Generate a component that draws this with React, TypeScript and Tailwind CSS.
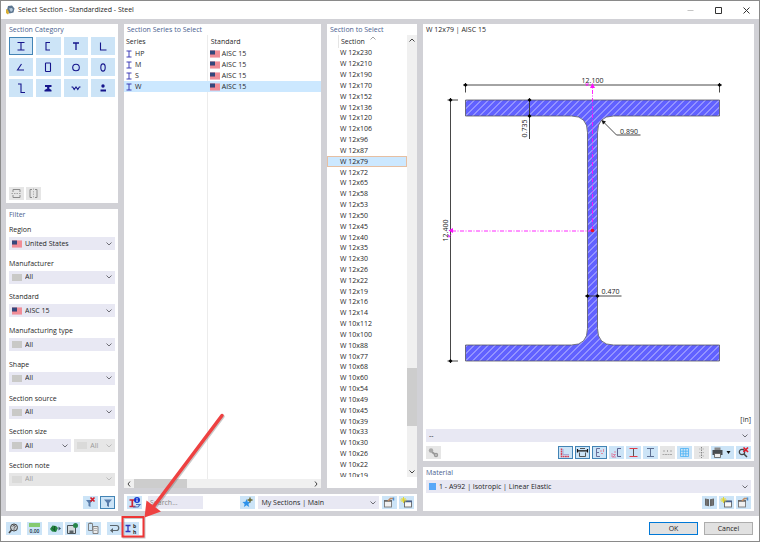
import { useState } from "react";
import type { ReactNode } from "react";
import clsx from "clsx";

const sections = [
  ...[230, 210, 190, 170, 152, 136, 120, 106, 96, 87, 79, 72, 65, 58, 53, 50, 45, 40, 35, 30, 26, 22, 19, 16, 14].map(
    (weight) => `W 12x${weight}`
  ),
  ...[112, 100, 88, 77, 68, 60, 54, 49, 45, 39, 33, 30, 26, 22, 19].map((weight) => `W 10x${weight}`),
];

const Svg = ({ children, className, box = "0 0 15 13" }: { children: ReactNode; className?: string; box?: string }) => (
  <svg viewBox={box} className={clsx("shrink-0", className)} fill="none" aria-hidden="true">
    {children}
  </svg>
);

const Flag = () => (
  <Svg box="0 0 10 8" className="h-2 w-2.5">
    <rect y="0.5" width="10" height="7" fill="#ee7f8b" />
    <path d="M5 2h5M5 4h5M0 6h10" stroke="#f6a9b0" strokeWidth="0.7" />
    <rect y="0.5" width="5" height="4" fill="#34477c" />
  </Svg>
);

const Blank = ({ faded }: { faded?: boolean }) => (
  <span className={clsx("h-[7px] w-2.5 shrink-0", faded ? "bg-[#dadad9]" : "bg-[#c9c9c7]")} />
);

const Chevron = ({ faded }: { faded?: boolean }) => (
  <Svg box="0 0 6 4" className="pointer-events-none -ml-2 h-1 w-1.5">
    <path d="M0.5 0.5 3 3 5.5 0.5" stroke={faded ? "#b4b4b4" : "#606068"} strokeWidth="0.9" />
  </Svg>
);

type DropDownProps = {
  id?: string;
  value: string;
  icon?: ReactNode;
  disabled?: boolean;
  label?: string;
  className?: string;
};

const DropDown = ({ id, value, icon, disabled, label, className }: DropDownProps) => (
  <span
    className={clsx(
      "flex h-[13px] min-w-0 items-center gap-[3px] pr-[3px] pl-[3px]",
      disabled ? "bg-[#e6e6e6] text-[#9a9a9a]" : "bg-[#e8e8f3]",
      className
    )}
  >
    {icon}
    <select id={id} aria-label={label} disabled={disabled} className="min-w-0 flex-1 appearance-none bg-transparent">
      <option>{value}</option>
    </select>
    <Chevron faded={disabled} />
  </span>
);

type IconButtonProps = { label: string; children: ReactNode; active?: boolean; disabled?: boolean; className?: string };

const IconButton = ({ label, children, active, disabled, className }: IconButtonProps) => (
  <button
    aria-label={label}
    disabled={disabled}
    className={clsx(
      "flex h-[13px] items-center justify-center",
      className ?? "w-[15px]",
      disabled ? "bg-[#e6e6e6]" : "bg-[#cce4f7]",
      active && "outline outline-1 -outline-offset-1 outline-[#4384b5]"
    )}
  >
    {children}
  </button>
);

const PanelTitle = ({ children }: { children: ReactNode }) => (
  <h2 className="px-[3px] font-medium text-[#4a5f90]">{children}</h2>
);

const navy = "#15158c";

const categories = [
  { name: "I-sections", shape: <path d="M8.500 5.500h7M8.500 13h7M12 5.500v7.500" /> },
  { name: "Channels", shape: <path d="M14 5.500h-4v7.500h4" /> },
  { name: "T-sections", shape: <path d="M9 6h6M12 6v7" strokeWidth="1.300" /> },
  { name: "Angles", shape: <path d="M9.500 5.500v7.500h6" /> },
  { name: "Rolled angles", shape: <path d="m12.500 6-4 6h6.500" /> },
  { name: "Rectangular hollow sections", shape: <rect x="9.500" y="5" width="5" height="8.500" rx="0.600" /> },
  { name: "Circular hollow sections", shape: <circle cx="12" cy="9.500" r="3.300" /> },
  { name: "Elliptical hollow sections", shape: <ellipse cx="12" cy="9.500" rx="2.200" ry="3.600" /> },
  { name: "Z-sections", shape: <path d="M9 5h3v8.500h4" /> },
  {
    name: "Rails",
    shape: (
      <path d="M9 6h6.500v2h-2l-.3 1.500 2.300 1.500v1.500H8.500v-1.500l2.800-1.500-.3-1.500H9z" fill={navy} stroke="none" />
    ),
  },
  { name: "Corrugated sheets", shape: <path d="m7.500 8 1.200 0 1.500 2.500L12 8l1.800 2.500L15.300 8h1.200" /> },
  {
    name: "Round bars",
    shape: (
      <>
        <circle cx="12" cy="7" r="1.700" fill={navy} stroke="none" />
        <rect x="9.500" y="10.500" width="5.500" height="2" fill={navy} stroke="none" />
      </>
    ),
  },
];

const filters = [
  { id: "region", label: "Region", value: "United States", flag: true },
  { id: "manufacturer", label: "Manufacturer", value: "All" },
  { id: "standard", label: "Standard", value: "AISC 15", flag: true },
  { id: "manufacturing-type", label: "Manufacturing type", value: "All" },
  { id: "shape", label: "Shape", value: "All" },
  { id: "section-source", label: "Section source", value: "All" },
  { id: "section-size", label: "Section size", value: "All", split: true },
  { id: "section-note", label: "Section note", value: "All", disabled: true },
];

function CategoryPanel() {
  const [selected, setSelected] = useState("I-sections");

  return (
    <section className="flex h-[179px] flex-col bg-white pt-px">
      <PanelTitle>Section Category</PanelTitle>
      <div className="mt-0.5 grid grid-cols-4 gap-[3px] px-[3px]">
        {categories.map(({ name, shape }) => (
          <button
            key={name}
            aria-label={name}
            onClick={() => setSelected(name)}
            className={clsx(
              "flex h-[18px] justify-center bg-[#cce4f7]",
              selected === name && "outline outline-1 -outline-offset-1 outline-[#4384b5]"
            )}
          >
            <svg viewBox="0 0 24 18" className="h-[18px] w-6" fill="none" stroke={navy} strokeWidth="1.1">
              {shape}
            </svg>
          </button>
        ))}
      </div>
      <div className="mt-auto flex gap-0.5 px-[3px] pb-[3px]">
        <IconButton label="Horizontal split" disabled>
          <Svg className="h-[13px] w-[15px]">
            <path d="M4 5V2.500h7V5M4 8v2.500h7V8" stroke="#8c8c8c" />
            <path d="M2.500 6.500h10" stroke="#a5a5a5" strokeDasharray="1.500 1" />
          </Svg>
        </IconButton>
        <IconButton label="Vertical split" disabled>
          <Svg className="h-[13px] w-[15px]">
            <path d="M6 2.500H4v8h2M9 2.500h2v8H9" stroke="#8c8c8c" />
            <path d="M7.500 1.500v10" stroke="#b5b5b5" strokeDasharray="1.500 1" />
          </Svg>
        </IconButton>
      </div>
    </section>
  );
}

function FilterPanel() {
  return (
    <section className="flex min-h-0 flex-1 flex-col bg-white pt-px">
      <PanelTitle>Filter</PanelTitle>
      <div className="mt-[5px] flex flex-1 flex-col justify-between px-[3px]">
        {filters.map(({ id, label, value, flag, split, disabled }) => (
          <div key={id} className="flex flex-col gap-0.5">
            <label htmlFor={id}>{label}</label>
            <div className="flex gap-[3px]">
              <DropDown
                id={id}
                value={value}
                disabled={disabled}
                icon={flag ? <Flag /> : <Blank faded={disabled} />}
                className="flex-[63]"
              />
              {split && (
                <DropDown label="Maximum size" value={value} disabled icon={<Blank faded />} className="flex-[39]" />
              )}
            </div>
          </div>
        ))}
      </div>
      <div className="mt-2.5 flex justify-end gap-0.5 px-[3px] pb-0.5">
        <IconButton label="Clear filter">
          <Svg className="h-[13px] w-[15px]">
            <path d="M3 4h7L7.500 7v4L5.500 10V7z" fill="#587cab" />
            <path d="m7.500 1.500 4 4m0-4-4 4" stroke="#d61c28" strokeWidth="1.700" />
          </Svg>
        </IconButton>
        <IconButton label="Filter" active>
          <Svg className="h-[13px] w-[15px]">
            <path d="M4 3.500h8L9 7v4L7 10V7z" fill="#587cab" />
          </Svg>
        </IconButton>
      </div>
    </section>
  );
}

function SeriesPanel() {
  const [selected, setSelected] = useState("W");

  return (
    <section className="flex min-h-0 flex-col bg-white pt-px">
      <PanelTitle>Section Series to Select</PanelTitle>
      <div className="flex-1 bg-[linear-gradient(#ececec,#ececec)] bg-[length:1px_100%] bg-[position:42.500%_0] bg-no-repeat">
        <table className="w-full table-fixed border-collapse text-left">
          <thead>
            <tr className="h-[13px]">
              <th className="w-[43%] p-0 pl-0.5 font-normal">Series</th>
              <th className="p-0 pl-0.5 font-normal">Standard</th>
            </tr>
          </thead>
          <tbody>
            {["HP", "M", "S", "W"].map((name) => (
              <tr
                key={name}
                onClick={() => setSelected(name)}
                className={clsx("h-[11px]", selected === name && "bg-[#cce8ff]")}
              >
                <td className="p-0 pl-0.5">
                  <span className="flex items-center gap-[3px]">
                    <Svg box="0 0 6 8" className="h-2 w-1.5">
                      <path d="M0.500 1h5M0.500 7h5M3 1v6" stroke="#2b2bb0" strokeWidth="0.9" />
                    </Svg>
                    {name}
                  </span>
                </td>
                <td className="p-0 pl-px">
                  <span className="flex items-center gap-0.5">
                    <Flag />
                    AISC 15
                  </span>
                </td>
              </tr>
            ))}
          </tbody>
        </table>
      </div>
      <div className="flex h-[9px] items-center justify-between bg-[#f0f0f0] px-[3px]">
        <Svg box="0 0 4 6" className="h-1.5 w-1">
          <path d="M3 0.500 1 3l2 2.500" stroke="#444" />
        </Svg>
        <span className="mr-auto ml-[3px] h-[9px] w-[28%] bg-[#cdcdcd]" />
        <Svg box="0 0 4 6" className="h-1.5 w-1">
          <path d="m1 0.500 2 2.500-2 2.500" stroke="#444" />
        </Svg>
      </div>
    </section>
  );
}

function SectionList() {
  const [selected, setSelected] = useState("W 12x79");

  return (
    <section className="flex min-h-0 flex-col bg-white pt-px pb-[11px]">
      <PanelTitle>Section to Select</PanelTitle>
      <div className="flex min-h-0 flex-1">
        <div className="flex min-w-0 flex-1 flex-col">
          <div className="ml-[11px] flex h-[13px] items-center border-l border-[#e5e5e5] pl-0.5">
            <span className="flex-1">Section</span>
            <Svg box="0 0 6 4" className="mr-[31px] -mt-2 h-1 w-1.5">
              <path d="M0.500 3.500 3 1l2.500 2.500" stroke="#8a8a8a" strokeWidth="0.800" />
            </Svg>
          </div>
          <div className="min-h-0 flex-1 overflow-hidden">
            <ul className="flex h-[101%] flex-col">
              {sections.map((name) => (
                <li key={name} className="flex min-h-0 flex-1">
                  <button
                    onClick={() => setSelected(name)}
                    className={clsx(
                      "flex flex-1 items-center border pl-3 text-left",
                      selected === name ? "border-[#e6bfa2] bg-[#cce8ff]" : "border-transparent"
                    )}
                  >
                    {name}
                  </button>
                </li>
              ))}
            </ul>
          </div>
        </div>
        <div className="flex w-2.5 flex-col items-center bg-[#f0f0f0] py-[3px]">
          <Svg box="0 0 6 4" className="h-1 w-1.5">
            <path d="M0.500 3.500 3 1l2.500 2.500" stroke="#444" />
          </Svg>
          <span className="flex-[325]" />
          <span className="w-full flex-[58] bg-[#cdcdcd]" />
          <span className="flex-[44]" />
          <Svg box="0 0 6 4" className="h-1 w-1.5">
            <path d="M0.500 0.500 3 3l2.500-2.500" stroke="#444" />
          </Svg>
        </div>
      </div>
    </section>
  );
}

const WindowNew = () => (
  <Svg className="h-[13px] w-[15px]">
    <rect x="5.500" y="5" width="7" height="6" fill="#f8f8f8" stroke="#666" strokeWidth="0.900" />
    <path d="M5 5.500h8" stroke="#49618c" strokeWidth="1.500" />
    <path d="M4.500 1v6M1.500 4h6M2.500 2l4 4m0-4-4 4" stroke="#e6d51c" strokeWidth="0.900" />
  </Svg>
);

const WindowEdit = () => (
  <Svg className="h-[13px] w-[15px]">
    <rect x="2.500" y="4.500" width="7" height="6.500" fill="#f0f0f0" stroke="#777" strokeWidth="0.900" />
    <path d="M2 5h8" stroke="#666" strokeWidth="1.500" />
    <path d="m6 5 2.500-2.500H11" stroke="#c18d63" strokeWidth="1.700" />
    <path d="M11.500 1.500v3" stroke="#4f8fd0" strokeWidth="1.500" />
  </Svg>
);

function LibraryBar() {
  return (
    <div className="flex h-[17px] items-center bg-white px-[3px]">
      <IconButton label="Section info">
        <Svg className="h-[13px] w-[15px]">
          <path d="M2.500 4h5M2.500 10.500h6M5.300 4v6" stroke="#cf2535" strokeWidth="1.700" />
          <path d="M6 11h5l2-2.500H9" stroke="#4a6fc0" strokeWidth="1.200" />
          <circle cx="10" cy="4" r="3" fill="#1437d0" />
          <path d="M10 2v.8M10 3.400V6" stroke="#fff" />
        </Svg>
      </IconButton>
      <input
        aria-label="Search sections"
        placeholder="Search..."
        className="ml-1.5 h-[13px] w-[55px] bg-[#e8e8f3] px-0.5 placeholder:text-[#888]"
      />
      <IconButton label="Add to favorites" className="ml-auto w-[15px]">
        <Svg className="h-[13px] w-[15px]">
          <path d="m6.500 3 1.200 2.700 2.900.2-2.200 2 .8 3-2.700-1.600L3.900 11l.7-3.100-2.200-2 3-.2z" fill="#2d92ea" />
          <path d="M10 1.500v5M7.500 4h5" stroke="#68662c" strokeWidth="1.400" />
        </Svg>
      </IconButton>
      <DropDown label="Section library" value="My Sections | Main" className="mr-[3px] ml-[3px] w-[42%]" />
      <div className="flex gap-0.5">
        <IconButton label="Edit library">
          <WindowEdit />
        </IconButton>
        <IconButton label="New library">
          <WindowNew />
        </IconButton>
      </div>
    </div>
  );
}

const outline =
  "M465.500 99.500H719.500V115.500H613.500Q597.500 115.500 597.500 132V328Q597.500 344.500 613.500 344.500H719.500V360.500H465.500V344.500H571.500Q587.500 344.500 587.500 328V132Q587.500 115.500 571.500 115.500H465.500Z";

const Tick = ({ x, y }: { x: number; y: number }) => (
  <path d={`M${x - 2} ${y}L${x} ${y - 2}L${x + 2} ${y}L${x} ${y + 2}Z`} fill="#000" stroke="none" />
);

function SectionDrawing() {
  return (
    <svg
      viewBox="423 35 331 379"
      className="min-h-0 w-full flex-1 text-[7px]"
      role="img"
      aria-label="Cross-section W 12x79"
    >
      <defs>
        <pattern id="hatch" width="7" height="7" patternUnits="userSpaceOnUse">
          <rect width="7" height="7" fill="#6161ff" />
          <path d="M-1.500 1.500l3-3M0 7L7 0M5.500 8.500l3-3" stroke="#d0d0ff" strokeWidth="0.900" />
        </pattern>
      </defs>
      <path d={outline} fill="url(#hatch)" stroke="#55555f" strokeWidth="0.800" />
      <g stroke="#333" strokeWidth="0.900" fill="none">
        <path d="M465.500 92v-9.500M719.500 82.500V92M463 84.500h259" />
        <path d="M458 99.500h-10.500M450.500 97.500v265M447.500 360.500h10.500" />
        <path d="M529.500 98v40.500" />
        <path d="M585 295.500h36.500" />
        <path d="m602.500 120.500 14 14h24" />
      </g>
      <Tick x={465.5} y={84.5} />
      <Tick x={719.5} y={84.5} />
      <Tick x={450.5} y={99.5} />
      <Tick x={450.5} y={360.5} />
      <Tick x={529.5} y={99.5} />
      <Tick x={529.5} y={115.5} />
      <Tick x={587.5} y={295.5} />
      <Tick x={597.5} y={295.5} />
      <path d="m601.500 119.500 4.500 1.500-3 3z" fill="#111" />
      <g stroke="#ff10ff" strokeWidth="0.900" fill="none">
        <path d="M592.500 229.500V86" strokeDasharray="4 1.500 1 1.500" />
        <path d="M592 230.500H452" strokeDasharray="4 1.500 1 1.500" />
        <path d="m585.500 83 3 2m0-2.500-2.500 3M448 234l2 3m1-3-3 3" />
      </g>
      <path d="m592.500 82.500 2.500 5h-5zM448.500 230l4.500-2.500v5z" fill="#ff10ff" />
      <circle cx="592.500" cy="230" r="1.800" fill="#f01020" />
      <g fill="#222" textAnchor="middle">
        <text x="592.500" y="82.500">
          12.100
        </text>
        <text x="629" y="133">
          0.890
        </text>
        <text x="610.500" y="293">
          0.470
        </text>
        <text transform="translate(448 230) rotate(-90)">12.400</text>
        <text transform="translate(527 128) rotate(-90)">0.735</text>
      </g>
    </svg>
  );
}

function PreviewPanel() {
  return (
    <section className="flex min-h-0 flex-1 flex-col bg-white pt-px pb-0.5">
      <h2 className="px-[3px]">W 12x79 | AISC 15</h2>
      <SectionDrawing />
      <div className="px-[3px] text-right">[in]</div>
      <DropDown label="Result type" value="--" className="mx-[3px] mt-1" />
      <div className="mt-1 flex gap-0.5 px-[3px]">
        <IconButton label="Display settings" disabled>
          <Svg className="h-[13px] w-[15px]">
            <circle cx="5" cy="4.500" r="2.200" fill="#aaa" />
            <path d="m6 6 5 4" stroke="#999" strokeWidth="2" />
            <circle cx="10" cy="9" r="2.200" fill="#999" />
            <circle cx="10" cy="9" r="0.800" fill="#ddd" />
          </Svg>
        </IconButton>
        <span className="flex-1" />
        <IconButton label="Stress points" active>
          <Svg className="h-[13px] w-[15px]">
            <path d="M3.500 2.500v8H11" stroke="#d84055" strokeWidth="1.500" strokeDasharray="1.800 0.500" />
            <path d="M5 3v5.500h6" stroke="#9a90c8" strokeWidth="0.700" />
          </Svg>
        </IconButton>
        <IconButton label="Dimensions" active>
          <Svg className="h-[13px] w-[15px]">
            <path d="M2.500 3v3.500M12.500 3v3.500M2.500 4.800h10" stroke="#111" strokeWidth="1.200" />
            <path d="M5 2.500h5M4.500 6.500v4h6v-4" stroke="#444" strokeWidth="0.900" />
          </Svg>
        </IconButton>
        <IconButton label="Classification" active>
          <Svg className="h-[13px] w-[15px]">
            <path d="M8 2.500H4.500v8H8M4.500 6.500H7" stroke="#6a6f9c" />
            <path d="M8 5h2M11.500 3v3M9 7.500h2" stroke="#e08aa0" />
          </Svg>
        </IconButton>
        <IconButton label="Section axes">
          <Svg className="h-[13px] w-[15px]">
            <path d="M12 2.500H8.500v8H12" stroke="#5b6190" />
            <path d="M3 7v4h4M4 8.500h2.500L4 11M6 5v2" stroke="#df6c92" strokeWidth="0.800" />
          </Svg>
        </IconButton>
        <IconButton label="Show flanges">
          <Svg className="h-[13px] w-[15px]">
            <path d="M7.500 3v7" stroke="#555" />
            <path d="M3.500 2.500h8M3.500 10.500h8" stroke="#e03c46" strokeWidth="1.100" />
          </Svg>
        </IconButton>
        <IconButton label="Show outline">
          <Svg className="h-[13px] w-[15px]">
            <path d="M4 2.500h7M4 10.500h7M7.500 2.500v8" stroke="#5d6f93" />
          </Svg>
        </IconButton>
        <IconButton label="Show values" disabled>
          <Svg className="h-[13px] w-[15px]">
            <path d="M2.500 8.500h10" stroke="#999" strokeDasharray="2 0.500" strokeWidth="0.800" />
            <path d="M4 4v2M7.500 4v2M11 4v2" stroke="#aaa" />
          </Svg>
        </IconButton>
        <IconButton label="Show grid">
          <Svg className="h-[13px] w-[15px]">
            <path d="M3.500 2.500h8v8h-8zM6.200 2.500v8M8.800 2.500v8M3.500 5.200h8M3.500 7.800h8" stroke="#49b1f5" strokeWidth="0.800" />
          </Svg>
        </IconButton>
        <IconButton label="Show centerline" disabled>
          <Svg className="h-[13px] w-[15px]">
            <path d="M7.500 1v11" stroke="#888" strokeDasharray="1.500 1" />
            <path d="M5 3h1.500M8.500 3H10M5 6.500h1.500M8.500 6.500H10M5 10h1.500M8.500 10H10" stroke="#bbb" />
          </Svg>
        </IconButton>
        <IconButton label="Print" className="w-[23px]">
          <Svg box="0 0 23 13" className="h-[13px] w-[23px]">
            <path d="M3.500 1.500h6V4h-6z" fill="#888" />
            <path d="M1.500 4h10v5h-10z" fill="#484c50" />
            <path d="M3.500 7.500h6v4h-6z" fill="#eee" stroke="#555" strokeWidth="0.800" />
            <path d="M15.500 5h4l-2 3z" fill="#111" />
          </Svg>
        </IconButton>
        <IconButton label="Reset zoom">
          <Svg className="h-[13px] w-[15px]">
            <circle cx="6" cy="6" r="2.700" stroke="#444" strokeWidth="1.200" />
            <path d="m8 8 3 3" stroke="#444" strokeWidth="1.500" />
            <path d="m7.500 1.500 4.500 4.500m0-4.500L7.500 6" stroke="#df1828" strokeWidth="1.700" />
          </Svg>
        </IconButton>
      </div>
    </section>
  );
}

function MaterialPanel() {
  return (
    <section className="bg-white pt-px pb-0.5">
      <PanelTitle>Material</PanelTitle>
      <DropDown
        label="Material"
        value="1 - A992 | Isotropic | Linear Elastic"
        icon={<span className="size-[7px] shrink-0 bg-[#57a8f8]" />}
        className="mx-[3px] mt-0.5"
      />
      <div className="mt-[3px] flex justify-end gap-0.5 px-[3px]">
        <IconButton label="Material library">
          <Svg className="h-[13px] w-[15px]">
            <path d="m3 2.500 4 .7v7L3 9.500zM12 2.500l-4 .7v7l4-.7z" fill="#626262" />
            <path d="M4.800 3v6.500M10.200 3v6.500" stroke="#8a8a8a" strokeWidth="0.700" />
          </Svg>
        </IconButton>
        <IconButton label="New material">
          <WindowNew />
        </IconButton>
        <IconButton label="Edit material">
          <WindowEdit />
        </IconButton>
      </div>
    </section>
  );
}

function Footer() {
  return (
    <footer className="flex h-[25px] shrink-0 items-center bg-white pr-1.5 pl-[5px]">
      <div className="flex items-center gap-1.5">
        <IconButton label="Help">
          <Svg className="h-[13px] w-[15px]">
            <circle cx="8" cy="5.500" r="3.500" fill="#c5cbd0" stroke="#444" />
            <path d="M6.800 4.500c0-1.500 2.500-1.300 2.500.1 0 .8-1.200.9-1.200 2M8 7.300v.8" stroke="#333" strokeWidth="0.800" />
            <path d="m5.500 8-2.500 3" stroke="#444" strokeWidth="1.600" />
          </Svg>
        </IconButton>
        <IconButton label="Units">
          <Svg className="h-[13px] w-[15px]">
            <rect x="2" y="1" width="11" height="4" fill="#85ca70" />
            <text x="7.500" y="11" textAnchor="middle" fill="#234" className="text-[5px] font-semibold">
              0,00
            </text>
          </Svg>
        </IconButton>
        <div className="flex gap-0.5">
          <IconButton label="Import">
            <Svg className="h-[13px] w-[15px]">
              <path d="m2 7 2.500-3.500 3.500.5 2 2-2 4-4-.5z" fill="#238442" />
              <path d="M4 5.500 7 9M6.500 4v5" stroke="#175a2c" />
              <path d="m10.500 4.500 2.500 2-2.500 2z" fill="#34546c" />
            </Svg>
          </IconButton>
          <IconButton label="Save as">
            <Svg className="h-[13px] w-[15px]">
              <path d="M2.500 3.500h8v8h-8z" fill="#d4dadd" stroke="#4a5358" />
              <path d="M4.500 8.500h4v3h-4z" fill="#596267" />
              <circle cx="10.500" cy="3.500" r="2.500" fill="#27864a" />
            </Svg>
          </IconButton>
        </div>
        <IconButton label="Copy to clipboard">
          <Svg className="h-[13px] w-[15px]">
            <path d="M2.500 1.500h4v7h-4zM3.500 1h2" stroke="#777" strokeWidth="0.900" />
            <path d="M7 4.500h5v7H7z" fill="#ececec" stroke="#777" strokeWidth="0.900" />
            <path d="M8 6.500h3M8 8.500h3" stroke="#999" strokeWidth="0.700" />
          </Svg>
        </IconButton>
        <div className="flex gap-0.5">
          <IconButton label="Undo">
            <Svg className="h-[13px] w-[15px]">
              <path d="M3 3.500h6.500c3 0 3 5 0 5H4" stroke="#5b656c" strokeWidth="1.200" />
              <path d="M6 6 3 8.500 6 11z" fill="#5b656c" />
            </Svg>
          </IconButton>
          <IconButton label="Parametric section">
            <Svg className="h-[13px] w-[15px]">
              <path d="M1.500 3.500h5M1.500 9.500h5M4 3.500v6" stroke="#3036b8" strokeWidth="1.300" />
              <text x="9" y="5.500" fill="#222" className="text-[5px] font-bold">
                b
              </text>
              <text x="9" y="12" fill="#222" className="text-[5px] font-bold">
                h
              </text>
            </Svg>
          </IconButton>
        </div>
      </div>
      <div className="ml-auto flex gap-1.5">
        <button className="h-[13px] w-[49px] bg-[#e1e1e1] text-center leading-[13px] ring-1 ring-[#0078d7] ring-inset">
          OK
        </button>
        <button className="h-[13px] w-[49px] bg-[#e1e1e1] text-center leading-[13px] ring-1 ring-[#adadad] ring-inset">
          Cancel
        </button>
      </div>
    </footer>
  );
}

// Highlights the parametric section button in the footer
const Callout = () => (
  <svg
    viewBox="118 408 112 134"
    className="pointer-events-none absolute bottom-0 left-[117px] h-[134px] w-28"
    fill="none"
    aria-hidden="true"
  >
    <g stroke="#777" opacity="0.400">
      <path d="M223 417.500 156 507" strokeWidth="3.500" strokeLinecap="round" />
      <rect x="123.500" y="519" width="21" height="19.500" strokeWidth="2" />
    </g>
    <rect x="122.500" y="518" width="21" height="19.500" stroke="#ee3535" strokeWidth="2" />
    <path d="M222 416.500 154 507" stroke="#ee4141" strokeWidth="3.500" strokeLinecap="round" />
    <path d="m144.500 518.500 2-17 14.500 11z" fill="#ee4141" />
  </svg>
);

export default function App() {
  return (
    <div className="relative flex h-screen flex-col border border-[#8a8a8a] bg-white font-['Open_Sans','Noto_Sans',sans-serif] text-[7px] leading-[10px] text-[#1f1f1f]">
      <header className="flex h-[18px] shrink-0 items-center gap-[3px] pr-[9px] pl-1">
        <Svg box="0 0 10 10" className="size-2.5">
          <path d="m3 1 4-.5 2.500 3-1 4-4 1L2 5z" fill="#5c7690" />
          <path d="M4 3.500 7 3l1 2-2 2z" fill="#b7cadb" />
          <path d="m1 4 2 1 1 3-1 1.500L1 8z" fill="#d8ae32" />
        </Svg>
        <h1 className="flex-1">Select Section - Standardized - Steel</h1>
        <div className="flex items-center gap-[21px]">
          <button aria-label="Minimize">
            <Svg box="0 0 7 7" className="size-[7px]">
              <path d="M0.500 3.500h6" stroke="#c5c5c5" />
            </Svg>
          </button>
          <button aria-label="Maximize">
            <Svg box="0 0 7 7" className="size-[7px]">
              <path d="M0.500 0.500h6v6h-6z" stroke="#333" />
            </Svg>
          </button>
          <button aria-label="Close">
            <Svg box="0 0 7 7" className="size-[7px]">
              <path d="m0.500 0.500 6 6m0-6-6 6" stroke="#333" />
            </Svg>
          </button>
        </div>
      </header>

      <main className="grid min-h-0 flex-1 grid-cols-[112px_minmax(0,293fr)_minmax(0,331fr)] gap-1.5 bg-[#d1d1d6] p-[5px]">
        <div className="flex min-h-0 flex-col gap-1.5">
          <CategoryPanel />
          <FilterPanel />
        </div>
        <div className="flex min-h-0 flex-col gap-1.5">
          <div className="grid min-h-0 flex-1 grid-cols-[minmax(0,1fr)_90px] grid-rows-[minmax(0,1fr)] gap-1.5">
            <SeriesPanel />
            <SectionList />
          </div>
          <LibraryBar />
        </div>
        <div className="flex min-h-0 flex-col gap-1.5">
          <PreviewPanel />
          <MaterialPanel />
        </div>
      </main>

      <Footer />
      <Callout />
    </div>
  );
}
